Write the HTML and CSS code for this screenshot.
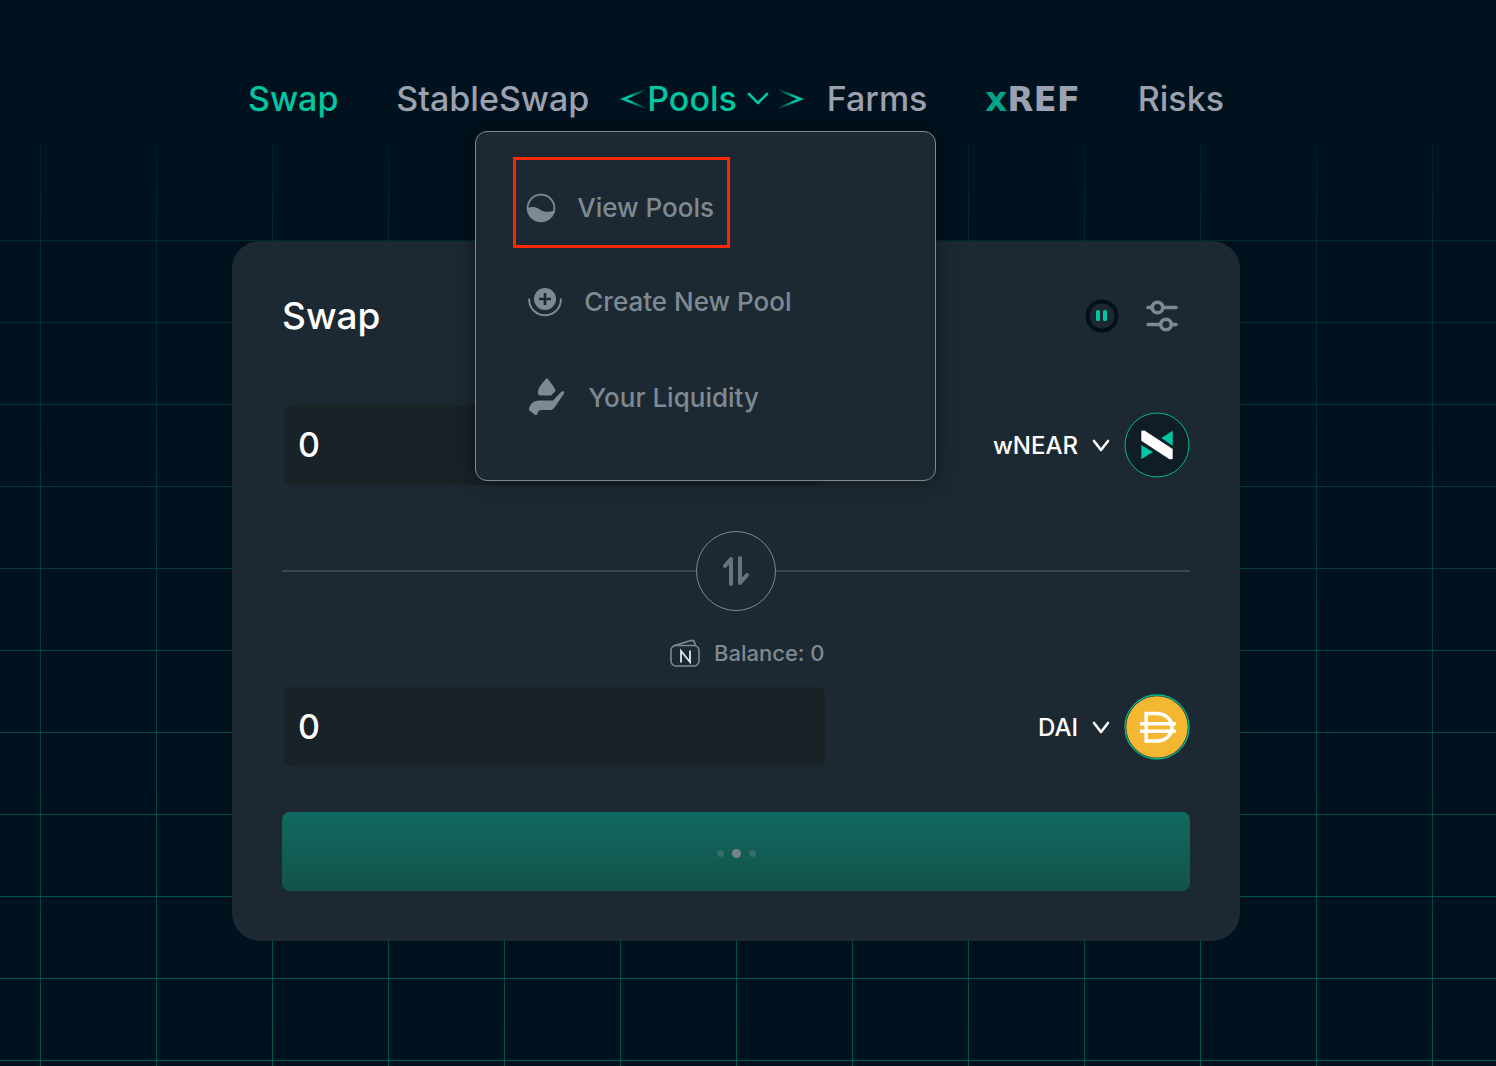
FILE: index.html
```html
<!DOCTYPE html>
<html lang="en">
<head>
<meta charset="utf-8">
<meta name="viewport" content="width=device-width, initial-scale=1">
<title>Swap</title>
<link rel="stylesheet" href="styles.css">
</head>
<body>
<div class="page">
  <nav class="nav" aria-label="Main">
    <a class="nav-link is-active" href="#swap">Swap</a>
    <a class="nav-link" href="#stable">StableSwap</a>
    <div class="nav-group">
      <button class="nav-link nav-toggle is-active" type="button" aria-expanded="true">
        Pools
        <svg class="nav-chevron" width="22" height="14" viewBox="0 0 22 14" fill="none" stroke="currentColor" stroke-width="2.600" stroke-linecap="round" stroke-linejoin="round"><path d="M2 2l9 9 9-9"/></svg>
      </button>
      <svg class="bracket bracket-left" width="26" height="20" viewBox="0 0 26 20"><defs><linearGradient id="bl"><stop offset="0.4" stop-color="#00c6a2"/><stop offset="1" stop-color="#00c6a2" stop-opacity="0.100"/></linearGradient></defs><path fill="url(#bl)" d="M0 10L25 0v2L7 10l18 8v2z"/></svg>
      <svg class="bracket bracket-right" width="26" height="20" viewBox="0 0 26 20"><defs><linearGradient id="br"><stop offset="0" stop-color="#00c6a2" stop-opacity="0.100"/><stop offset="0.6" stop-color="#00c6a2"/></linearGradient></defs><path fill="url(#br)" d="M26 10L1 0v2l18 8-18 8v2z"/></svg>
      <div class="menu">
        <a class="menu-item is-marked" href="#pools">
          <svg width="30" height="30" viewBox="0 0 30 30"><circle cx="15" cy="15" r="13.4" fill="none" stroke="currentColor" stroke-width="1.8"/><path fill="currentColor" d="M1 15.500C5 13.500 9 13.500 13 16c5 3.500 9 3.500 16 1.500A14.300 14.300 0 0 1 1 15.500z"/></svg>
          View Pools
        </a>
        <a class="menu-item" href="#create">
          <svg width="36" height="30" viewBox="0 0 36 30"><circle cx="18" cy="12" r="11" fill="currentColor"/><path d="M18 6v12M12 12h12" stroke="#1d2932" stroke-width="2.600"/><path d="M2.200 11.500V13a15.800 15.200 0 0 0 31.600 0v-1.500" fill="none" stroke="currentColor" stroke-width="2"/></svg>
          Create New Pool
        </a>
        <a class="menu-item" href="#liquidity">
          <svg width="40" height="40" viewBox="0 0 40 40" fill="currentColor"><path d="M20 0c4 5 8.500 10 8.500 13L24 17.500H13c-1.500 0-2-1-2-3C11 10 15 5 20 0z"/><path d="M2 32c0-5 4-9.500 10-9.500h14l8-8.500c2.500-1.500 4.500-1 3 1.500L28 29c-2 2.500-3 3-6 3h-7c-3 0-4 1-4.500 4.500L8 37z"/></svg>
          Your Liquidity
        </a>
      </div>
    </div>
    <a class="nav-link" href="#farms">Farms</a>
    <a class="nav-link brand" href="#xref"><span class="brand-x">x</span>REF</a>
    <a class="nav-link" href="#risks">Risks</a>
  </nav>

  <main class="card">
    <header class="card-head">
      <h1 class="title">Swap</h1>
      <div class="tools">
        <button class="icon-button" type="button" aria-label="Pause refresh">
          <svg width="34" height="34" viewBox="0 0 34 34"><circle cx="17" cy="17" r="14.500" fill="none" stroke="#00111d" stroke-width="4"/><rect x="11" y="11" width="4" height="11" rx="1.500" fill="#00c6a2"/><rect x="18" y="11" width="4" height="11" rx="1.500" fill="#00c6a2"/></svg>
        </button>
        <button class="icon-button" type="button" aria-label="Settings">
          <svg width="32" height="32" viewBox="0 0 32 32" fill="none" stroke="#7e8a93" stroke-width="3.600" stroke-linecap="round"><path d="M2 7.500h3M18 7.500h12M2 24.500h11M26 24.500h4"/><circle cx="11.500" cy="7.500" r="5.300"/><circle cx="20" cy="24.500" r="5.300"/></svg>
        </button>
      </div>
    </header>

    <div class="token-row">
      <input class="amount" type="text" value="0" aria-label="Amount to pay">
      <button class="token" type="button">
        wNEAR
        <svg width="18" height="13" viewBox="0 0 18 13" fill="none" stroke="currentColor" stroke-width="2.600" stroke-linecap="round" stroke-linejoin="round"><path d="M2 2l7 9 7-9"/></svg>
        <svg class="coin" width="66" height="66" viewBox="-33 -33 66 66"><circle r="32" fill="#0f1d27" stroke="#00b98f"/><path fill="#00c6a2" d="M4.300-7l11.400-7.300V.7zM-15.700 0v14.300L-4 7z"/><path fill="#fff" d="M-15.700-14.300l3.200-.2L15.700 4v10l-3.200.2-28.200-18.500z"/></svg>
      </button>
    </div>

    <div class="divider">
      <button class="flip" type="button" aria-label="Switch tokens">
        <svg width="28" height="30" viewBox="0 0 28 30" fill="none" stroke="#68737c" stroke-width="4" stroke-linecap="round" stroke-linejoin="round"><path d="M3 10l6-7v25M18 2v25l7-8"/></svg>
      </button>
    </div>

    <div class="balance">
      <svg width="32" height="28" viewBox="0 0 32 28"><rect x="2" y="6.500" width="28" height="20.500" rx="5" fill="none" stroke="#7e8a93" stroke-width="1.600"/><path d="M4 7L22 1.500c2-.5 3 0 3.500 2l1 3" fill="none" stroke="#7e8a93" stroke-width="1.600"/><path d="M12 23.500V12l9 11V11.500" fill="none" stroke="#e4e7ea" stroke-width="1.800"/></svg>
      Balance: 0
    </div>

    <div class="token-row">
      <input class="amount" type="text" value="0" aria-label="Amount to receive">
      <button class="token" type="button">
        DAI
        <svg width="18" height="13" viewBox="0 0 18 13" fill="none" stroke="currentColor" stroke-width="2.600" stroke-linecap="round" stroke-linejoin="round"><path d="M2 2l7 9 7-9"/></svg>
        <svg class="coin" width="66" height="66" viewBox="-33 -33 66 66"><circle r="32" fill="#1d2932" stroke="#00b98f" stroke-width="1.300"/><circle r="30.800" fill="#f4b731"/><path d="M-10.800-13.500H-1C8-13.500 15-8 15 .3S8 14-1 14h-9.800zM-17-3.200h36M-17 4.200h36" fill="none" stroke="#fff" stroke-width="3.600"/></svg>
      </button>
    </div>

    <button class="submit" type="button" aria-label="Loading">
      <span class="dot"></span><span class="dot dot-on"></span><span class="dot"></span>
    </button>
  </main>
</div>
</body>
</html>
```
FILE: styles.css
```css
* { box-sizing: border-box; }

body {
  margin: 0;
  min-height: 100vh;
  background: #00121e;
  color: #fff;
  font-family: Inter, "Open Sans", sans-serif;
  font-weight: 500;
}

button {
  margin: 0;
  padding: 0;
  border: 0;
  background: none;
  color: inherit;
  font: inherit;
  cursor: pointer;
}

a { color: inherit; text-decoration: none; }
svg { display: block; flex: none; }

.page {
  position: relative;
  min-height: 100vh;
  padding: 76px 24px 48px 0;
}

/* Fading grid behind the card */
.page::before,
.page::after {
  content: "";
  position: absolute;
  z-index: -1;
}

.page::before {
  inset: 144px 0 0;
  background: linear-gradient(90deg, #006656 1px, transparent 1px) 40px 0 / 116px 100%;
  mask-image: linear-gradient(rgba(0, 0, 0, 0.2), rgba(0, 0, 0, 0.8));
}

.page::after {
  inset: 240px 0 0;
  background: linear-gradient(#006656 1px, transparent 1px) 0 0 / 100% 82px;
  mask-image: linear-gradient(rgba(0, 0, 0, 0.3), rgba(0, 0, 0, 0.9));
}

.nav {
  position: relative;
  z-index: 1;
  display: flex;
  justify-content: space-between;
  width: 976px;
  max-width: 100%;
  margin: 0 auto;
  color: #9ca1af;
  font-size: 34px;
  line-height: 46px;
}

.nav-link { white-space: nowrap; }
.nav-link.is-active { color: #00c6a2; }
.nav-group { position: relative; }

.nav-toggle {
  display: flex;
  align-items: center;
  gap: 10px;
}

.bracket { position: absolute; top: 13px; }
.bracket-left { right: 100%; margin-right: 1px; }
.bracket-right { left: 100%; margin-left: 9px; }

.brand {
  font-family: "DejaVu Sans", sans-serif;
  font-weight: 700;
}
.brand-x { color: #00a58a; }

.menu {
  position: absolute;
  top: 55px;
  left: -172px;
  display: flex;
  flex-direction: column;
  align-items: flex-start;
  width: 461px;
  padding: 25px 37px 40px;
  border: 1px solid #7e8a93;
  border-radius: 12px;
  background: #1d2932;
  box-shadow: 0 0 20px rgba(0, 0, 0, 0.5);
}

.menu-item {
  display: flex;
  align-items: center;
  gap: 21px;
  height: 96px;
  padding: 11px 17px 0 14px;
  color: #7e8a93;
  font-size: 26px;
  line-height: 36px;
  white-space: nowrap;
}

.menu-item.is-marked {
  height: 91px;
  padding: 11px 13px 0 10px;
  border: 3px solid #ff2600;
}

.card {
  display: flex;
  flex-direction: column;
  width: 1008px;
  max-width: 100%;
  margin: 119px auto 0;
  padding: 50px;
  border-radius: 28px;
  background: #1d2932;
}

.card-head {
  display: flex;
  align-items: center;
  justify-content: space-between;
  height: 50px;
  margin-bottom: 64px;
}

.title {
  margin: 0;
  font-size: 37px;
  font-weight: 500;
  line-height: 50px;
}

.tools {
  display: flex;
  align-items: center;
  gap: 27px;
  padding-right: 12px;
}

.token-row {
  display: flex;
  align-items: center;
  justify-content: space-between;
  padding-left: 2px;
}

.amount {
  width: 541px;
  max-width: 60%;
  height: 80px;
  padding: 0 14px 2px;
  border: 0;
  border-radius: 8px;
  background: #182227;
  color: #fff;
  font: inherit;
  font-size: 34px;
}

.token {
  display: flex;
  align-items: center;
  gap: 14px;
  font-size: 24px;
}

.divider {
  display: flex;
  align-items: center;
  margin: 46px 0 28px;
}

.divider::before,
.divider::after {
  content: "";
  flex: 1;
  height: 2px;
  background: #3a464e;
}

.flip {
  display: grid;
  place-items: center;
  width: 80px;
  height: 80px;
  border: 1px solid #7e8a93;
  border-radius: 50%;
}

.balance {
  display: flex;
  align-items: center;
  gap: 13px;
  height: 28px;
  margin: 0 0 20px 387px;
  color: #7e8a93;
  font-size: 22px;
}

.submit {
  display: flex;
  align-items: center;
  justify-content: center;
  gap: 8px;
  height: 79px;
  margin-top: 45px;
  padding-top: 4px;
  border-radius: 8px;
  background: linear-gradient(#126a60, #12524b);
}

.dot {
  width: 7px;
  height: 7px;
  border-radius: 50%;
  background: #366c69;
}

.dot-on {
  width: 9px;
  height: 9px;
  background: #758488;
}
```
